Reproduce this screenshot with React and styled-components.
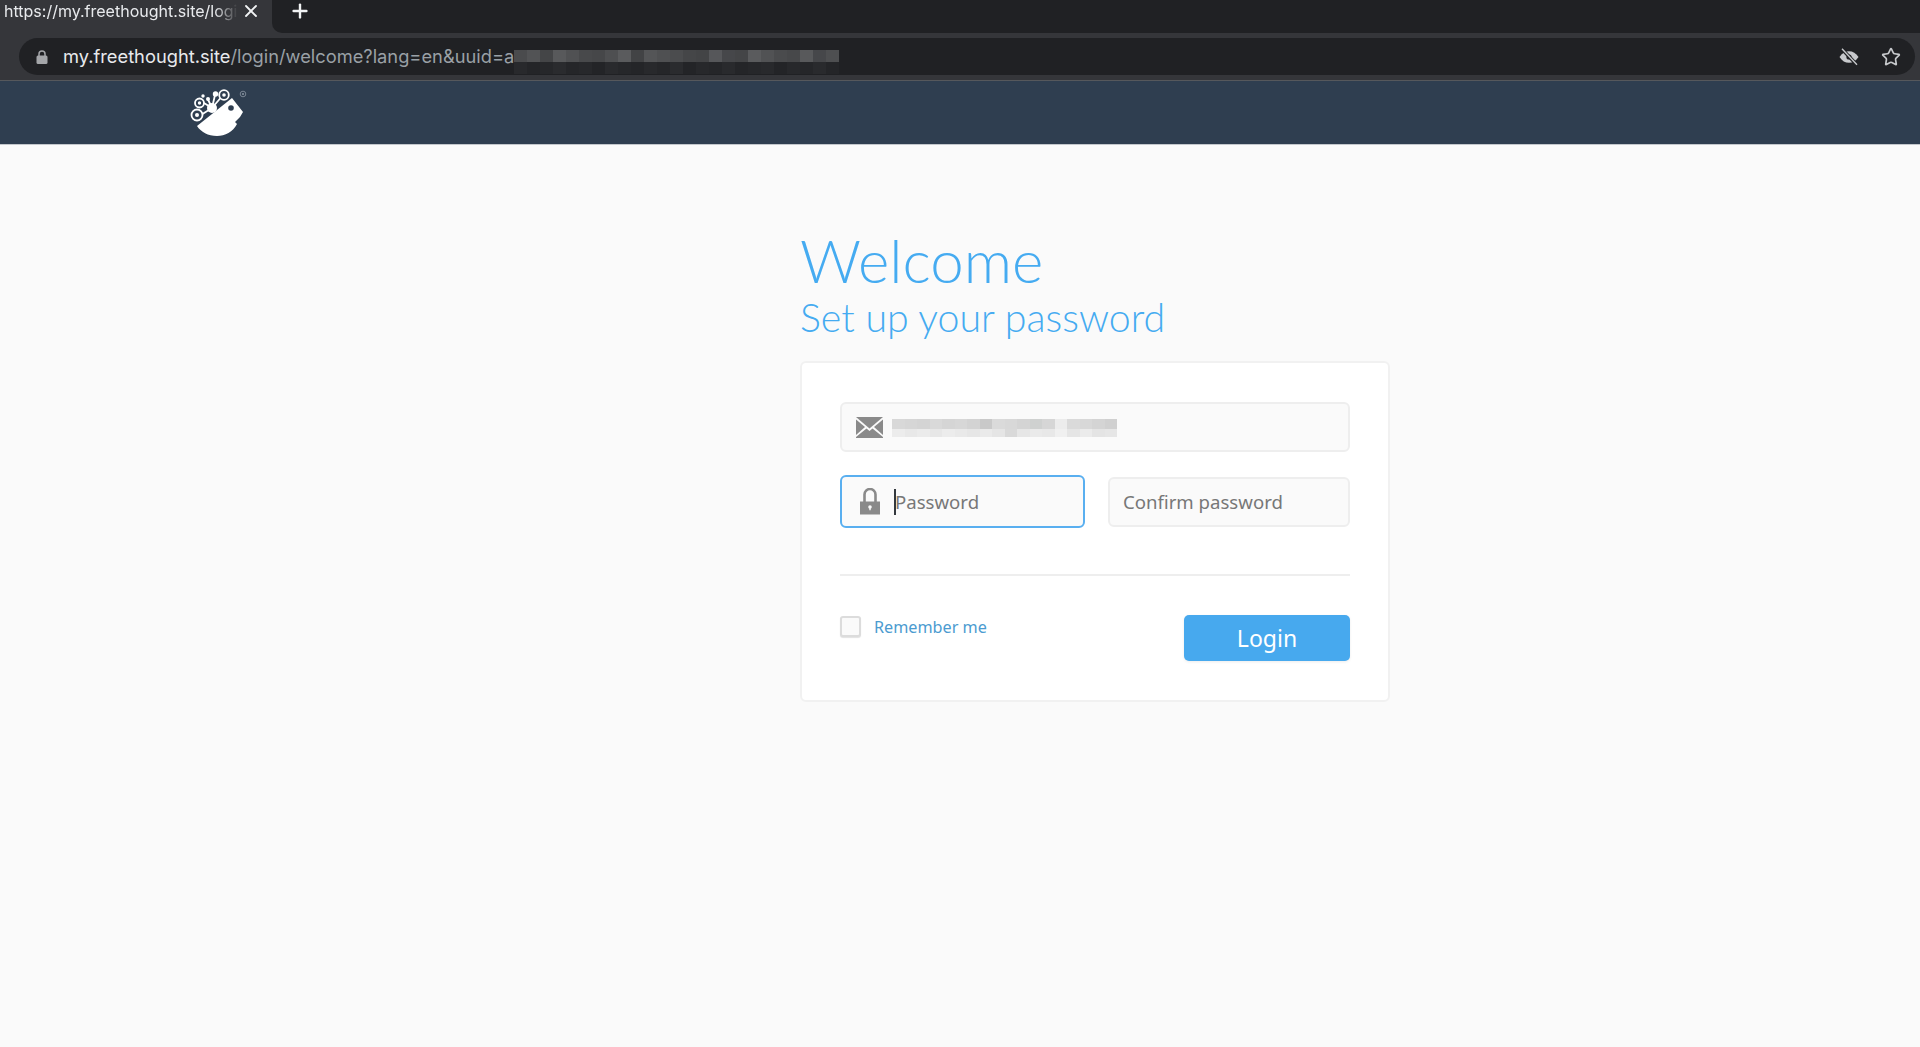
import React from "react";
import styled, { createGlobalStyle } from "styled-components";
import { Star, X, Plus } from "lucide-react";

const GlobalStyle = createGlobalStyle`
  html, body {
    margin: 0;
    padding: 0;
    background: #fafafa;
    font-family: "Noto Sans", "Open Sans", sans-serif;
  }
  * {
    box-sizing: border-box;
  }
`;

const Page = styled.div`
  width: 1920px;
  height: 1047px;
  overflow: hidden;
  display: flex;
  flex-direction: column;
`;

// browser chrome
const TabStrip = styled.div`
  height: 33px;
  display: flex;
  background: #35363a;
`;

const Tab = styled.div`
  width: 272px;
  display: flex;
  align-items: center;
  padding: 0 0 12px 4px;
  color: #e8eaed;
  font-family: Inter, sans-serif;
  font-size: 16px;
  line-height: 20px;
`;

const TabTitle = styled.span`
  width: 234px;
  white-space: nowrap;
  -webkit-mask-image: linear-gradient(to right, #000 90%, transparent 100%);
  mask-image: linear-gradient(to right, #000 90%, transparent 100%);
`;

const TabClose = styled.span`
  display: flex;
  margin-left: 3px;
  color: #f1f3f4;
`;

const StripRest = styled.div`
  flex: 1;
  display: flex;
  padding: 0 0 12px 17px;
  align-items: center;
  background: #202124;
  border-bottom-left-radius: 10px;
  color: #f1f3f4;
`;

const Toolbar = styled.div`
  height: 48px;
  padding: 5px 5px 5px 19px;
  background: #35363a;
  border-bottom: 1px solid #56585c;
`;

const Omnibox = styled.div`
  height: 37px;
  display: flex;
  align-items: center;
  padding: 0 14px 0 17px;
  border-radius: 19px;
  background: #202124;
  font-family: Inter, sans-serif;
  font-size: 18.3px;
`;

const UrlHost = styled.span`
  margin: 0 0 2px 15px;
  color: #e8eaed;
`;

const UrlPath = styled.span`
  margin-bottom: 2px;
  color: #9aa0a6;
`;

const UrlBlur = styled.div`
  display: flex;
  align-self: flex-start;
  margin-top: 12px;
  flex-direction: column;
`;

const Mosaic = styled.div`
  display: flex;
`;

const Cell = styled.span`
  display: block;
  width: ${({ $w }) => $w}px;
  height: ${({ $h }) => $h}px;
  background: ${({ $c }) => $c};
`;

const OmniIcons = styled.div`
  margin-left: auto;
  display: flex;
  align-items: center;
  gap: 22px;
  color: #c7c9cc;
`;

// site
const NavBar = styled.header`
  height: 64px;
  padding: 7px 0 0 188px;
  background: #2f3e50;
  border-bottom: 1px solid #c3c7cc;
`;

const Main = styled.main`
  width: 590px;
  margin-left: 800px;
  padding-top: 79px;
`;

const Title = styled.h1`
  margin: 0;
  color: #45abf1;
  font-family: Lato, sans-serif;
  font-size: 60px;
  line-height: 72px;
  font-weight: 300;
`;

const Subtitle = styled.h2`
  margin: -4px 0 0;
  color: #45abf1;
  font-family: Lato, sans-serif;
  font-size: 39.3px;
  line-height: 50px;
  font-weight: 300;
`;

const Card = styled.form`
  height: 341px;
  margin-top: 19px;
  padding: 39px 38px 0;
  border: 2px solid #f1f1f1;
  border-radius: 6px;
  background: #fff;
`;

const Field = styled.div`
  display: flex;
  align-items: center;
  width: ${({ $w }) => $w};
  height: ${({ $h }) => $h}px;
  padding: 0 ${({ $focus }) => ($focus ? 14 : 13)}px;
  border: ${({ $focus }) => ($focus ? "2px solid #59aff0" : "2px solid #eeeeee")};
  border-radius: 6px;
  background: #fafafa;
`;

const IconSlot = styled.span`
  display: flex;
  justify-content: center;
  width: 28px;
  margin-right: 10px;
  flex-shrink: 0;
`;

const Caret = styled.span`
  width: 2px;
  height: 26px;
  margin-right: -1px;
  flex-shrink: 0;
  background: #33383d;
`;

const TextInput = styled.input`
  flex: 1;
  min-width: 0;
  padding: 0;
  border: none;
  outline: none;
  background: transparent;
  font-family: "Noto Sans", sans-serif;
  font-size: 18.6px;
  color: #777;
  &::placeholder {
    color: #777;
    opacity: 1;
  }
`;

const EmailBlur = styled.div`
  display: flex;
  flex-direction: column;
  margin: 2px 0 0 -1px;
`;

const PasswordRow = styled.div`
  display: flex;
  align-items: center;
  justify-content: space-between;
  margin-top: 23px;
`;

const Divider = styled.hr`
  margin: 46px 0 0;
  border: none;
  border-top: 2px solid #eeeeee;
`;

const Footer = styled.div`
  display: flex;
  align-items: flex-start;
  justify-content: space-between;
  margin-top: 39px;
`;

const RememberLabel = styled.label`
  display: flex;
  align-items: center;
  gap: 13px;
  margin-top: 1px;
  color: #4b9bd0;
  font-size: 16.2px;
  line-height: 20px;
`;

const Checkbox = styled.span`
  display: block;
  width: 21px;
  height: 21px;
  border: 2px solid #dcdcdc;
  border-radius: 3px;
  background: #fafafa;
  box-shadow: 0 1px 1px rgba(0, 0, 0, 0.12);
`;

const LoginButton = styled.button`
  width: 166px;
  height: 46px;
  padding: 0;
  border: none;
  border-radius: 5px;
  background: #47a9ee;
  color: #fff;
  font-family: "Noto Sans", sans-serif;
  font-size: 23px;
  box-shadow: 0 1px 3px rgba(0, 0, 0, 0.08);
`;

const urlCells = ["#4a4b4d", "#525355", "#444547", "#58595b", "#505153", "#48494b", "#464749", "#4e4f51", "#5a5b5d", "#424345", "#545557", "#4f5052", "#4b4c4e", "#454648", "#434446", "#56575a", "#46474a", "#444547", "#5a5b5d", "#515254", "#4a4b4d", "#47484a", "#58595b", "#46474a", "#4e4f51"];
const urlShade = ["#28292c", "#242528", "#26272a", "#2a2b2e", "#252629", "#27282b", "#232427", "#292a2d", "#26272a", "#242528", "#28292c", "#252629", "#2a2b2e", "#232427", "#27282b", "#252629", "#292a2d", "#242528", "#26272a", "#28292c", "#232427", "#27282b", "#252629", "#292a2d", "#242528"];
const mailTop = ["#d8d8d8", "#d6d6d6", "#d4d4d4", "#d9d9d9", "#d5d5d5", "#d7d7d7", "#d3d3d3", "#c9c9c9", "#dadada", "#d8d8d8", "#d4d4d4", "#cfd1d0", "#d6d6d6", "#ececec", "#dadada", "#d8d8d8", "#d4d4d4", "#d0d0d0"];
const mailBottom = ["#ececec", "#e8e8e8", "#ebebeb", "#e7e7e7", "#ececec", "#e9e9e9", "#e6e6e6", "#eaeaea", "#e5e5e5", "#d9d9d9", "#e6e6e6", "#eaeaea", "#e8e8e8", "#f0f0f0", "#e5e5e5", "#ebebeb", "#e4e4e4", "#e6e6e6"];

const MailIcon = () => (
  <svg width="27" height="21" viewBox="0 0 27 21" fill="#8a8a8a">
    <path d="M0 0h27L13.5 11.5z" />
    <path d="M0 2.5v15.500l9-8z" />
    <path d="M27 2.5v15.500l-9-8z" />
    <path d="M0 21v-1l10.5-8.500 3 2.500 3-2.500L27 20v1z" />
  </svg>
);

const PadlockIcon = () => (
  <svg width="20" height="27" viewBox="0 0 20 27">
    <path d="M4.5 14V6.500a5.500 5.500 0 0 1 11 0V14" fill="none" stroke="#8a8a8a" strokeWidth="2.6" />
    <path d="M0 13.5h20v13H0z" fill="#8a8a8a" />
    <circle cx="10" cy="19" r="1.8" fill="#fafafa" />
    <path d="M9.3 19.5h1.400v2.700H9.3z" fill="#fafafa" />
  </svg>
);

const SmallLock = () => (
  <svg width="12" height="14" viewBox="0 0 12 14">
    <path d="M3 6.5V4a3 3 0 0 1 6 0v2.500" fill="none" stroke="#a4a6a9" strokeWidth="1.5" />
    <rect x="0.5" y="5.5" width="11" height="8.5" rx="1.5" fill="#a4a6a9" />
  </svg>
);

const EyeSlash = () => (
  <svg width="20" height="18" viewBox="0 0 20 18">
    <path d="M0.5 9C3 5 6.200 3.200 10 3.200S17 5 19.500 9C17 13 13.800 14.800 10 14.800S3 13 0.500 9z" fill="#c7c9cc" />
    <circle cx="10" cy="9" r="2.6" fill="#202124" />
    <path d="M2.5 0.5L18 17" stroke="#202124" strokeWidth="3.4" />
    <path d="M3 0.8L18 16.800" stroke="#c7c9cc" strokeWidth="1.4" />
  </svg>
);

const BirdLogo = () => (
  <svg width="62" height="54" viewBox="188 88 62 54" fill="#fff">
    <path d="M197 126L232 98L243 112L240 117L235 122L237 124C233 132 225 136 217 136C208 136 201 132 197 126z" />
    <circle cx="231" cy="108" r="2.8" fill="#2f3e50" />
    <g fill="none" stroke="#fff" strokeWidth="1.8">
      <circle cx="197" cy="115" r="5.5" />
      <circle cx="199.5" cy="103" r="4.5" />
      <circle cx="224" cy="95" r="4.8" />
      <path d="M202.5 114L212 108M204 103L212 108M220.5 98L212 108M208 99.5L212 108M215 95L212 108" />
    </g>
    <circle cx="197" cy="115" r="2" />
    <circle cx="199.5" cy="103" r="1.7" />
    <circle cx="224" cy="95" r="1.8" />
    <circle cx="212" cy="108" r="5" />
    <circle cx="215.5" cy="94" r="2.7" />
    <circle cx="208" cy="99" r="2" />
    <circle cx="203" cy="96" r="1.7" />
    <circle cx="243" cy="94" r="2.8" fill="none" stroke="#8d97a3" strokeWidth="0.8" />
    <circle cx="243" cy="94" r="1" fill="#8d97a3" />
  </svg>
);

export default function App() {
  return (
    <Page>
      <GlobalStyle />
      <TabStrip>
        <Tab>
          <TabTitle>https://my.freethought.site/logi</TabTitle>
          <TabClose>
            <X size={20} strokeWidth={2.2} />
          </TabClose>
        </Tab>
        <StripRest>
          <Plus size={22} strokeWidth={2.6} />
        </StripRest>
      </TabStrip>
      <Toolbar>
        <Omnibox>
          <SmallLock />
          <UrlHost>my.freethought.site</UrlHost>
          <UrlPath>/login/welcome?lang=en&amp;uuid=a</UrlPath>
          <UrlBlur>
            <Mosaic>
              {urlCells.map((c, i) => (
                <Cell key={i} $w={13} $h={12} $c={c} />
              ))}
            </Mosaic>
            <Mosaic>
              {urlShade.map((c, i) => (
                <Cell key={i} $w={13} $h={12} $c={c} />
              ))}
            </Mosaic>
          </UrlBlur>
          <OmniIcons>
            <EyeSlash />
            <Star size={20} strokeWidth={2} />
          </OmniIcons>
        </Omnibox>
      </Toolbar>
      <NavBar>
        <BirdLogo />
      </NavBar>
      <Main>
        <Title>Welcome</Title>
        <Subtitle>Set up your password</Subtitle>
        <Card>
          <Field $w="100%" $h={50}>
            <IconSlot>
              <MailIcon />
            </IconSlot>
            <EmailBlur>
              <Mosaic>
                {mailTop.map((c, i) => (
                  <Cell key={i} $w={12.5} $h={10} $c={c} />
                ))}
              </Mosaic>
              <Mosaic>
                {mailBottom.map((c, i) => (
                  <Cell key={i} $w={12.5} $h={8} $c={c} />
                ))}
              </Mosaic>
            </EmailBlur>
          </Field>
          <PasswordRow>
            <Field $w="245px" $h={53} $focus>
              <IconSlot>
                <PadlockIcon />
              </IconSlot>
              <Caret />
              <TextInput type="password" placeholder="Password" readOnly />
            </Field>
            <Field $w="242px" $h={50}>
              <TextInput type="password" placeholder="Confirm password" readOnly />
            </Field>
          </PasswordRow>
          <Divider />
          <Footer>
            <RememberLabel>
              <Checkbox />
              Remember me
            </RememberLabel>
            <LoginButton type="button">Login</LoginButton>
          </Footer>
        </Card>
      </Main>
    </Page>
  );
}
